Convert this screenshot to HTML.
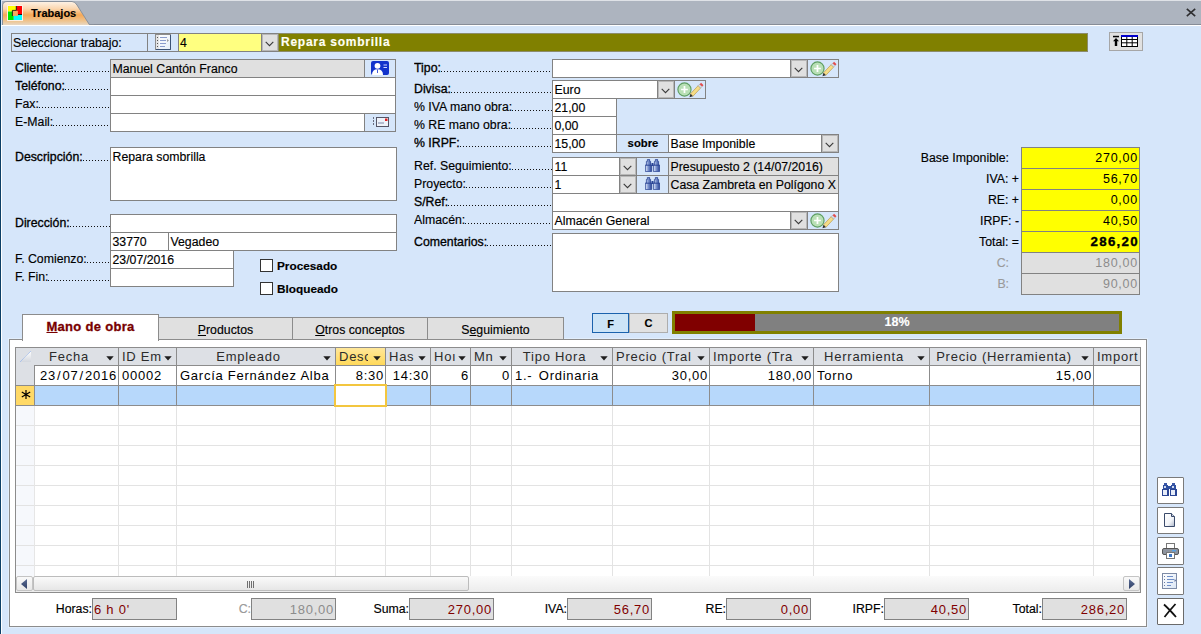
<!DOCTYPE html><html><head><meta charset="utf-8"><style>
html,body{margin:0;padding:0}
body{width:1201px;height:634px;overflow:hidden;position:relative;background:#d6e6fa;font-family:"Liberation Sans",sans-serif;font-size:12.3px;color:#000;-webkit-text-stroke:0.15px}
.a{position:absolute;box-sizing:border-box;overflow:hidden}
svg{-webkit-text-stroke:0}
.t{position:absolute;left:1.5px;top:2px;white-space:nowrap;line-height:15px}
.l{position:absolute;white-space:nowrap;line-height:15px}
.g{font-size:13px;letter-spacing:0.75px;-webkit-text-stroke:0}
</style></head><body>
<div class="a" style="left:0px;top:0px;width:1px;height:634px;background:#0d3f66"></div>
<div class="a" style="left:1px;top:25px;width:1px;height:609px;background:#ffffff"></div>
<div class="a" style="left:2px;top:0px;width:1199px;height:24px;background:#adb4bf"></div>
<div class="a" style="left:2px;top:0px;width:1199px;height:1px;background:#dfe2e7"></div>
<div class="a" style="left:2px;top:24px;width:1199px;height:1px;background:#878d97"></div>
<div class="a" style="left:2px;top:25px;width:1199px;height:1px;background:#ffffff"></div>
<svg class="a" style="left:2px;top:1px" width="92" height="25" viewBox="0 0 92 25">
<defs><linearGradient id="tg" x1="0" y1="0" x2="0" y2="1">
<stop offset="0" stop-color="#fdf3e8"/><stop offset="0.3" stop-color="#fbd6ae"/><stop offset="0.55" stop-color="#f6a957"/><stop offset="0.8" stop-color="#eec490"/><stop offset="1" stop-color="#e6ddd2"/></linearGradient></defs>
<path d="M0.5 25 V5 Q0.5 0.5 5 0.5 H70 Q73 0.5 75 4 L87.5 24 V25 Z" fill="url(#tg)"/><path d="M0.5 25 V5 Q0.5 0.5 5 0.5 H70 Q73 0.5 75 4 L87.5 23.8 H92" fill="none" stroke="#8a929c" stroke-width="1"/>
<rect x="0" y="24" width="92" height="1" fill="#ffffff"/>
</svg>
<svg class="a" style="left:7px;top:5px" width="16" height="16" viewBox="0 0 16 16">
<rect x="0" y="0" width="16" height="16" fill="#fbf1e6"/>
<rect x="1" y="1" width="8.3" height="5.5" fill="#ffff00"/><rect x="9.3" y="1" width="5.7" height="8.5" fill="#ff0000"/>
<rect x="1" y="6.5" width="5.8" height="8.5" fill="#00e600"/><rect x="6.8" y="9.5" width="8.2" height="5.5" fill="#00ffff"/>
<path d="M5.4 11 V5.4 H9.3 V1 M10.9 9.5 H15" fill="none" stroke="#1a1a1a" stroke-width="1"/>
<rect x="5.9" y="5.9" width="5" height="5" fill="#f5a860"/>
</svg>
<div class="l" style="left:31px;top:6px;font-size:11px;line-height:15px"><b>Trabajos</b></div>
<svg class="a" style="left:1186px;top:8px" width="10" height="9" viewBox="0 0 10 9"><path d="M0.8 0.8 L9.2 8.2 M9.2 0.8 L0.8 8.2" stroke="#2e2e30" stroke-width="1.6"/></svg>
<div class="a" style="left:11px;top:33px;width:137px;height:19px;border:1px solid #828282;background:#d6e6fa"><span class="t" style="left:1px;top:2px;font-size:12.3px">Seleccionar trabajo:</span></div>
<div class="a" style="left:147px;top:33px;width:32px;height:19px;border:1px solid #828282;background:#d6e6fa"></div>
<svg class="a" style="left:155px;top:34px" width="16" height="16" viewBox="0 0 16 16"><defs><linearGradient id="l0" x1="0" y1="0" x2="1" y2="1"><stop offset="0" stop-color="#fff"/><stop offset="1" stop-color="#e6eef8"/></linearGradient></defs><rect x="0.5" y="0.5" width="15" height="15" fill="url(#l0)" stroke="#8c8c8c"/><rect x="1" y="1" width="3" height="14" fill="#e4e4e4"/><path d="M15.5 1 V15.5 H1" fill="none" stroke="#3a5275"/><path d="M2.5 3 V4 M2.5 6 V7 M2.5 9 V10 M2.5 12 V13" stroke="#555"/><path d="M5 3.5 H12 M5 6.5 H11 M5 9.5 H11 M5 12.5 H10" stroke="#8a9ccc"/><path d="M12 5 L14 6.5 L12 8Z" fill="#9a9a9a"/></svg>
<div class="a" style="left:178px;top:33px;width:85px;height:19px;border:1px solid #828282;background:#ffff80;"><span class="t" style="top:2px;left:1px">4</span></div>
<div class="a" style="left:261px;top:33px;width:18px;height:19px;border:1px solid #828282;background:#e0e0e0;box-shadow:inset 0 0 0 1px #b8b8b8;display:flex;align-items:center;justify-content:center;padding-top:1px"><svg width="9" height="6" viewBox="0 0 9 6" style="margin-top:2px;margin-right:1px"><path d="M0.7 0.8 L4.5 4.6 L8.3 0.8" fill="none" stroke="#3a3a3a" stroke-width="1.1"/></svg></div>
<div class="a" style="left:278px;top:33px;width:810px;height:19px;background:#808000;border:1px solid #8c8c6a"><span class="t" style="left:2px;top:1px;color:#fffff4;font-weight:bold;font-size:12px;letter-spacing:0.75px">Repara sombrilla</span></div>
<div class="a" style="left:1109px;top:32px;width:34px;height:19px;border:1px solid #a6a6a6;background:#e1e1e1"></div>
<svg class="a" style="left:1112px;top:35px" width="26" height="12" viewBox="0 0 26 12"><rect x="1" y="0.8" width="6" height="1.5" fill="#000"/><path d="M4 3 L7 6.2 H5.2 V11 H2.8 V6.2 H1 Z" fill="#000"/><rect x="9.5" y="0.5" width="16" height="11" fill="#fff" stroke="#000"/><rect x="9" y="0" width="17" height="2" fill="#0000cc"/><path d="M9 4.5 H26 M9 7.8 H26 M14.8 2 V11.5 M20.2 2 V11.5" stroke="#000" stroke-width="1"/></svg>
<div class="a" style="left:15px;top:60px;width:95px;height:16px;display:flex;-webkit-text-stroke:0.3px"><span style="line-height:16px;white-space:nowrap">Cliente:</span><i style="flex:1;background-image:linear-gradient(to right,#111 1px,transparent 1px);background-size:3px 1px;background-repeat:repeat-x;background-position:0px 11px"></i></div>
<div class="a" style="left:15px;top:78px;width:95px;height:16px;display:flex;-webkit-text-stroke:0.3px"><span style="line-height:16px;white-space:nowrap">Teléfono:</span><i style="flex:1;background-image:linear-gradient(to right,#111 1px,transparent 1px);background-size:3px 1px;background-repeat:repeat-x;background-position:0px 11px"></i></div>
<div class="a" style="left:15px;top:96px;width:95px;height:16px;display:flex;"><span style="line-height:16px;white-space:nowrap">Fax:</span><i style="flex:1;background-image:linear-gradient(to right,#111 1px,transparent 1px);background-size:3px 1px;background-repeat:repeat-x;background-position:0px 11px"></i></div>
<div class="a" style="left:15px;top:114px;width:95px;height:16px;display:flex;"><span style="line-height:16px;white-space:nowrap">E-Mail:</span><i style="flex:1;background-image:linear-gradient(to right,#111 1px,transparent 1px);background-size:3px 1px;background-repeat:repeat-x;background-position:0px 11px"></i></div>
<div class="a" style="left:110px;top:59px;width:286px;height:19px;border:1px solid #828282;background:#e0e0e0;"><span class="t" style="">Manuel Cantón Franco</span></div>
<div class="a" style="left:364px;top:59px;width:32px;height:19px;border:1px solid #828282;background:#d6e6fa"></div>
<svg class="a" style="left:371px;top:61px" width="18" height="15" viewBox="0 0 18 15"><rect x="0" y="0" width="18" height="14" rx="2" fill="#1133cc"/><circle cx="6.5" cy="4.8" r="2.9" fill="#fff"/><path d="M1 14 Q1 8.3 6.5 8.3 Q12 8.3 12 14 Z" fill="#fff"/><path d="M6.5 8.5 V12" stroke="#1133cc" stroke-width="0.8"/><path d="M12.5 4 H16 M12.5 6.5 H16" stroke="#cfd8ff" stroke-width="1.2"/></svg>
<div class="a" style="left:110px;top:77px;width:286px;height:19px;border:1px solid #828282;background:#fff;"></div>
<div class="a" style="left:110px;top:95px;width:286px;height:19px;border:1px solid #828282;background:#fff;"></div>
<div class="a" style="left:110px;top:113px;width:286px;height:19px;border:1px solid #828282;background:#fff;"></div>
<div class="a" style="left:364px;top:113px;width:32px;height:19px;border:1px solid #828282;background:#d6e6fa"></div>
<svg class="a" style="left:372px;top:117px" width="17" height="10" viewBox="0 0 17 10"><path d="M1 1 H2 M1 4 H2 M1 7 H2" stroke="#445" stroke-width="1.5"/><rect x="4.5" y="0.5" width="12" height="9" fill="#eef2fa" stroke="#556" stroke-width="1"/><path d="M6 6 H12" stroke="#7a88a8" stroke-width="1"/><rect x="13" y="1.5" width="2.5" height="2.5" fill="#e02020"/></svg>
<div class="a" style="left:15px;top:149px;width:95px;height:16px;display:flex;-webkit-text-stroke:0.3px"><span style="line-height:16px;white-space:nowrap">Descripción:</span><i style="flex:1;background-image:linear-gradient(to right,#111 1px,transparent 1px);background-size:3px 1px;background-repeat:repeat-x;background-position:0px 11px"></i></div>
<div class="a" style="left:110px;top:147px;width:287px;height:54px;border:1px solid #828282;background:#fff;"><span class="t" style="">Repara sombrilla</span></div>
<div class="a" style="left:15px;top:215px;width:95px;height:16px;display:flex;-webkit-text-stroke:0.3px"><span style="line-height:16px;white-space:nowrap">Dirección:</span><i style="flex:1;background-image:linear-gradient(to right,#111 1px,transparent 1px);background-size:3px 1px;background-repeat:repeat-x;background-position:0px 11px"></i></div>
<div class="a" style="left:110px;top:214px;width:287px;height:19px;border:1px solid #828282;background:#fff;"></div>
<div class="a" style="left:110px;top:232px;width:59px;height:19px;border:1px solid #828282;background:#fff;"><span class="t" style="">33770</span></div>
<div class="a" style="left:168px;top:232px;width:229px;height:19px;border:1px solid #828282;background:#fff;"><span class="t" style="">Vegadeo</span></div>
<div class="a" style="left:15px;top:251px;width:95px;height:16px;display:flex;"><span style="line-height:16px;white-space:nowrap">F. Comienzo:</span><i style="flex:1;background-image:linear-gradient(to right,#111 1px,transparent 1px);background-size:3px 1px;background-repeat:repeat-x;background-position:0px 11px"></i></div>
<div class="a" style="left:15px;top:269px;width:95px;height:16px;display:flex;"><span style="line-height:16px;white-space:nowrap">F. Fin:</span><i style="flex:1;background-image:linear-gradient(to right,#111 1px,transparent 1px);background-size:3px 1px;background-repeat:repeat-x;background-position:0px 11px"></i></div>
<div class="a" style="left:110px;top:250px;width:124px;height:19px;border:1px solid #828282;background:#fff;"><span class="t" style="">23/07/2016</span></div>
<div class="a" style="left:110px;top:268px;width:124px;height:19px;border:1px solid #828282;background:#fff;"></div>
<div class="a" style="left:260px;top:259px;width:13px;height:13px;border:1px solid #333;background:#fff"></div>
<div class="l" style="left:277px;top:259px;font-size:11.8px"><b>Procesado</b></div>
<div class="a" style="left:260px;top:282px;width:13px;height:13px;border:1px solid #333;background:#fff"></div>
<div class="l" style="left:277px;top:282px;font-size:11.8px"><b>Bloqueado</b></div>
<div class="a" style="left:414px;top:60px;width:138px;height:16px;display:flex;-webkit-text-stroke:0.3px"><span style="line-height:16px;white-space:nowrap">Tipo:</span><i style="flex:1;background-image:linear-gradient(to right,#111 1px,transparent 1px);background-size:3px 1px;background-repeat:repeat-x;background-position:0px 11px"></i></div>
<div class="a" style="left:552px;top:59px;width:287px;height:19px;border:1px solid #828282;background:#fff;"></div>
<div class="a" style="left:790px;top:59px;width:18px;height:19px;border:1px solid #828282;background:#e0e0e0;box-shadow:inset 0 0 0 1px #b8b8b8;display:flex;align-items:center;justify-content:center;padding-top:1px"><svg width="9" height="6" viewBox="0 0 9 6" style="margin-top:2px;margin-right:1px"><path d="M0.7 0.8 L4.5 4.6 L8.3 0.8" fill="none" stroke="#3a3a3a" stroke-width="1.1"/></svg></div>
<div class="a" style="left:807px;top:59px;width:32px;height:19px;border:1px solid #828282;background:#d6e6fa;display:flex;align-items:center;justify-content:center"><svg width="30" height="17" viewBox="0 0 30 17" style="margin-right:1px"><circle cx="9.8" cy="8.5" r="6.8" fill="#b9e0b6" stroke="#5e9e62" stroke-width="1.2"/><path d="M9.8 5 V12 M6.3 8.5 H13.3" stroke="#fff" stroke-width="1.8"/><path d="M16 13 L24 4.5 L26.5 7 L18.5 15.5 Z" fill="#f6dc86" stroke="#b89a48" stroke-width="0.7"/><path d="M16 13 L18.5 15.5 L15 16.5 Z" fill="#303030"/><path d="M24 4.5 L25.5 3 L28 5.5 L26.5 7 Z" fill="#d8dde6" stroke="#999" stroke-width="0.5"/><path d="M25.5 3 L27 1.5 L29.5 4 L28 5.5 Z" fill="#e44a4a"/></svg></div>
<div class="a" style="left:414px;top:81px;width:138px;height:16px;display:flex;-webkit-text-stroke:0.3px"><span style="line-height:16px;white-space:nowrap">Divisa:</span><i style="flex:1;background-image:linear-gradient(to right,#111 1px,transparent 1px);background-size:3px 1px;background-repeat:repeat-x;background-position:0px 11px"></i></div>
<div class="a" style="left:552px;top:80px;width:154px;height:19px;border:1px solid #828282;background:#fff;"><span class="t" style="">Euro</span></div>
<div class="a" style="left:657px;top:80px;width:18px;height:19px;border:1px solid #828282;background:#e0e0e0;box-shadow:inset 0 0 0 1px #b8b8b8;display:flex;align-items:center;justify-content:center;padding-top:1px"><svg width="9" height="6" viewBox="0 0 9 6" style="margin-top:2px;margin-right:1px"><path d="M0.7 0.8 L4.5 4.6 L8.3 0.8" fill="none" stroke="#3a3a3a" stroke-width="1.1"/></svg></div>
<div class="a" style="left:674px;top:80px;width:32px;height:19px;border:1px solid #828282;background:#d6e6fa;display:flex;align-items:center;justify-content:center"><svg width="30" height="17" viewBox="0 0 30 17" style="margin-right:1px"><circle cx="9.8" cy="8.5" r="6.8" fill="#b9e0b6" stroke="#5e9e62" stroke-width="1.2"/><path d="M9.8 5 V12 M6.3 8.5 H13.3" stroke="#fff" stroke-width="1.8"/><path d="M16 13 L24 4.5 L26.5 7 L18.5 15.5 Z" fill="#f6dc86" stroke="#b89a48" stroke-width="0.7"/><path d="M16 13 L18.5 15.5 L15 16.5 Z" fill="#303030"/><path d="M24 4.5 L25.5 3 L28 5.5 L26.5 7 Z" fill="#d8dde6" stroke="#999" stroke-width="0.5"/><path d="M25.5 3 L27 1.5 L29.5 4 L28 5.5 Z" fill="#e44a4a"/></svg></div>
<div class="a" style="left:414px;top:99px;width:138px;height:16px;display:flex;"><span style="line-height:16px;white-space:nowrap">% IVA mano obra:</span><i style="flex:1;background-image:linear-gradient(to right,#111 1px,transparent 1px);background-size:3px 1px;background-repeat:repeat-x;background-position:0px 11px"></i></div>
<div class="a" style="left:552px;top:98px;width:65px;height:19px;border:1px solid #828282;background:#fff;"><span class="t" style="">21,00</span></div>
<div class="a" style="left:414px;top:117px;width:138px;height:16px;display:flex;"><span style="line-height:16px;white-space:nowrap">% RE mano obra:</span><i style="flex:1;background-image:linear-gradient(to right,#111 1px,transparent 1px);background-size:3px 1px;background-repeat:repeat-x;background-position:0px 11px"></i></div>
<div class="a" style="left:552px;top:116px;width:65px;height:19px;border:1px solid #828282;background:#fff;"><span class="t" style="">0,00</span></div>
<div class="a" style="left:414px;top:135px;width:138px;height:16px;display:flex;-webkit-text-stroke:0.3px"><span style="line-height:16px;white-space:nowrap">% IRPF:</span><i style="flex:1;background-image:linear-gradient(to right,#111 1px,transparent 1px);background-size:3px 1px;background-repeat:repeat-x;background-position:0px 11px"></i></div>
<div class="a" style="left:552px;top:134px;width:65px;height:19px;border:1px solid #828282;background:#fff;"><span class="t" style="">15,00</span></div>
<div class="a" style="left:616px;top:134px;width:53px;height:19px;border:1px solid #828282;background:#d6e6fa;text-align:center;line-height:16px;font-weight:bold;font-size:11.3px;padding-left:1px">sobre</div>
<div class="a" style="left:668px;top:134px;width:171px;height:19px;border:1px solid #828282;background:#fff;"><span class="t" style="">Base Imponible</span></div>
<div class="a" style="left:821px;top:134px;width:18px;height:19px;border:1px solid #828282;background:#e0e0e0;box-shadow:inset 0 0 0 1px #b8b8b8;display:flex;align-items:center;justify-content:center;padding-top:1px"><svg width="9" height="6" viewBox="0 0 9 6" style="margin-top:2px;margin-right:1px"><path d="M0.7 0.8 L4.5 4.6 L8.3 0.8" fill="none" stroke="#3a3a3a" stroke-width="1.1"/></svg></div>
<div class="a" style="left:414px;top:158px;width:138px;height:16px;display:flex;"><span style="line-height:16px;white-space:nowrap">Ref. Seguimiento:</span><i style="flex:1;background-image:linear-gradient(to right,#111 1px,transparent 1px);background-size:3px 1px;background-repeat:repeat-x;background-position:0px 11px"></i></div>
<div class="a" style="left:552px;top:157px;width:69px;height:19px;border:1px solid #828282;background:#fff;"><span class="t" style="">11</span></div>
<div class="a" style="left:619px;top:157px;width:18px;height:19px;border:1px solid #828282;background:#e0e0e0;box-shadow:inset 0 0 0 1px #b8b8b8;display:flex;align-items:center;justify-content:center;padding-top:1px"><svg width="9" height="6" viewBox="0 0 9 6" style="margin-top:2px;margin-right:1px"><path d="M0.7 0.8 L4.5 4.6 L8.3 0.8" fill="none" stroke="#3a3a3a" stroke-width="1.1"/></svg></div>
<div class="a" style="left:636px;top:157px;width:33px;height:19px;border:1px solid #828282;background:#d6e6fa;display:flex;align-items:center;justify-content:center;padding:0 1px 2px 0"><svg width="15" height="13" viewBox="0 0 15 13"><defs><linearGradient id="bg1" x1="0" y1="0" x2="1" y2="0"><stop offset="0" stop-color="#e8eefa"/><stop offset="0.45" stop-color="#7d95d0"/><stop offset="1" stop-color="#2b4596"/></linearGradient></defs><g fill="url(#bg1)" stroke="#2b4596" stroke-width="0.8"><path d="M2.4 0.4 H4.6 V2.4 H5.6 V6 H6.6 V12.6 H0.4 V6 H1.4 V2.4 H2.4 Z"/><path d="M10.4 0.4 H12.6 V2.4 H13.6 V6 H14.6 V12.6 H8.4 V6 H9.4 V2.4 H10.4 Z"/></g><rect x="6.5" y="4" width="2" height="3" fill="#2b4596"/><path d="M0.8 6.2 H6.2 M8.8 6.2 H14.2" stroke="#2b4596" stroke-width="1"/></svg></div>
<div class="a" style="left:668px;top:157px;width:171px;height:19px;border:1px solid #828282;background:#e0e0e0;"><span class="t" style="">Presupuesto 2 (14/07/2016)</span></div>
<div class="a" style="left:414px;top:176px;width:138px;height:16px;display:flex;"><span style="line-height:16px;white-space:nowrap">Proyecto:</span><i style="flex:1;background-image:linear-gradient(to right,#111 1px,transparent 1px);background-size:3px 1px;background-repeat:repeat-x;background-position:0px 11px"></i></div>
<div class="a" style="left:552px;top:175px;width:69px;height:19px;border:1px solid #828282;background:#fff;"><span class="t" style="">1</span></div>
<div class="a" style="left:619px;top:175px;width:18px;height:19px;border:1px solid #828282;background:#e0e0e0;box-shadow:inset 0 0 0 1px #b8b8b8;display:flex;align-items:center;justify-content:center;padding-top:1px"><svg width="9" height="6" viewBox="0 0 9 6" style="margin-top:2px;margin-right:1px"><path d="M0.7 0.8 L4.5 4.6 L8.3 0.8" fill="none" stroke="#3a3a3a" stroke-width="1.1"/></svg></div>
<div class="a" style="left:636px;top:175px;width:33px;height:19px;border:1px solid #828282;background:#d6e6fa;display:flex;align-items:center;justify-content:center;padding:0 1px 2px 0"><svg width="15" height="13" viewBox="0 0 15 13"><defs><linearGradient id="bg1" x1="0" y1="0" x2="1" y2="0"><stop offset="0" stop-color="#e8eefa"/><stop offset="0.45" stop-color="#7d95d0"/><stop offset="1" stop-color="#2b4596"/></linearGradient></defs><g fill="url(#bg1)" stroke="#2b4596" stroke-width="0.8"><path d="M2.4 0.4 H4.6 V2.4 H5.6 V6 H6.6 V12.6 H0.4 V6 H1.4 V2.4 H2.4 Z"/><path d="M10.4 0.4 H12.6 V2.4 H13.6 V6 H14.6 V12.6 H8.4 V6 H9.4 V2.4 H10.4 Z"/></g><rect x="6.5" y="4" width="2" height="3" fill="#2b4596"/><path d="M0.8 6.2 H6.2 M8.8 6.2 H14.2" stroke="#2b4596" stroke-width="1"/></svg></div>
<div class="a" style="left:668px;top:175px;width:171px;height:19px;border:1px solid #828282;background:#e0e0e0;"><span class="t" style="">Casa Zambreta en Polígono X</span></div>
<div class="a" style="left:414px;top:194px;width:138px;height:16px;display:flex;-webkit-text-stroke:0.3px"><span style="line-height:16px;white-space:nowrap">S/Ref:</span><i style="flex:1;background-image:linear-gradient(to right,#111 1px,transparent 1px);background-size:3px 1px;background-repeat:repeat-x;background-position:0px 11px"></i></div>
<div class="a" style="left:552px;top:193px;width:287px;height:19px;border:1px solid #828282;background:#fff;"></div>
<div class="a" style="left:414px;top:212px;width:138px;height:16px;display:flex;"><span style="line-height:16px;white-space:nowrap">Almacén:</span><i style="flex:1;background-image:linear-gradient(to right,#111 1px,transparent 1px);background-size:3px 1px;background-repeat:repeat-x;background-position:0px 11px"></i></div>
<div class="a" style="left:552px;top:211px;width:287px;height:19px;border:1px solid #828282;background:#fff;"><span class="t" style="">Almacén General</span></div>
<div class="a" style="left:790px;top:211px;width:18px;height:19px;border:1px solid #828282;background:#e0e0e0;box-shadow:inset 0 0 0 1px #b8b8b8;display:flex;align-items:center;justify-content:center;padding-top:1px"><svg width="9" height="6" viewBox="0 0 9 6" style="margin-top:2px;margin-right:1px"><path d="M0.7 0.8 L4.5 4.6 L8.3 0.8" fill="none" stroke="#3a3a3a" stroke-width="1.1"/></svg></div>
<div class="a" style="left:807px;top:211px;width:32px;height:19px;border:1px solid #828282;background:#d6e6fa;display:flex;align-items:center;justify-content:center"><svg width="30" height="17" viewBox="0 0 30 17" style="margin-right:1px"><circle cx="9.8" cy="8.5" r="6.8" fill="#b9e0b6" stroke="#5e9e62" stroke-width="1.2"/><path d="M9.8 5 V12 M6.3 8.5 H13.3" stroke="#fff" stroke-width="1.8"/><path d="M16 13 L24 4.5 L26.5 7 L18.5 15.5 Z" fill="#f6dc86" stroke="#b89a48" stroke-width="0.7"/><path d="M16 13 L18.5 15.5 L15 16.5 Z" fill="#303030"/><path d="M24 4.5 L25.5 3 L28 5.5 L26.5 7 Z" fill="#d8dde6" stroke="#999" stroke-width="0.5"/><path d="M25.5 3 L27 1.5 L29.5 4 L28 5.5 Z" fill="#e44a4a"/></svg></div>
<div class="a" style="left:414px;top:234px;width:138px;height:16px;display:flex;-webkit-text-stroke:0.3px"><span style="line-height:16px;white-space:nowrap">Comentarios:</span><i style="flex:1;background-image:linear-gradient(to right,#111 1px,transparent 1px);background-size:3px 1px;background-repeat:repeat-x;background-position:0px 11px"></i></div>
<div class="a" style="left:552px;top:233px;width:287px;height:59px;border:1px solid #828282;background:#fff;"></div>
<div class="a" style="left:1021px;top:147px;width:119px;height:22px;border:1px solid #828282;background:#ffff00"><span class="t g" style="left:auto;right:1px;top:3px;color:#000;font-size:12.5px;">270,00</span></div>
<div class="l" style="right:192px;top:151px;color:#000;font-size:12.3px">Base Imponible:</div>
<div class="a" style="left:1021px;top:168px;width:119px;height:22px;border:1px solid #828282;background:#ffff00"><span class="t g" style="left:auto;right:1px;top:3px;color:#000;font-size:12.5px;">56,70</span></div>
<div class="l" style="right:182px;top:172px;color:#000;font-size:12.3px">IVA: +</div>
<div class="a" style="left:1021px;top:189px;width:119px;height:22px;border:1px solid #828282;background:#ffff00"><span class="t g" style="left:auto;right:1px;top:3px;color:#000;font-size:12.5px;">0,00</span></div>
<div class="l" style="right:182px;top:193px;color:#000;font-size:12.3px">RE: +</div>
<div class="a" style="left:1021px;top:210px;width:119px;height:22px;border:1px solid #828282;background:#ffff00"><span class="t g" style="left:auto;right:1px;top:3px;color:#000;font-size:12.5px;">40,50</span></div>
<div class="l" style="right:182px;top:214px;color:#000;font-size:12.3px">IRPF: -</div>
<div class="a" style="left:1021px;top:231px;width:119px;height:22px;border:1px solid #828282;background:#ffff00"><span class="t g" style="left:auto;right:1px;top:3px;color:#000;font-size:12.5px;font-weight:bold;letter-spacing:1.3px;margin-right:-1px;font-size:13.3px;-webkit-text-stroke:0.35px;top:2px">286,20</span></div>
<div class="l" style="right:182px;top:235px;color:#000;font-size:12.3px">Total: =</div>
<div class="a" style="left:1021px;top:252px;width:119px;height:22px;border:1px solid #828282;background:#e0e0e0"><span class="t g" style="left:auto;right:1px;top:3px;color:#8c8c8c;font-size:12.5px;">180,00</span></div>
<div class="l" style="right:192px;top:256px;color:#9a9a9a;font-size:12.3px">C:</div>
<div class="a" style="left:1021px;top:273px;width:119px;height:22px;border:1px solid #828282;background:#e0e0e0"><span class="t g" style="left:auto;right:1px;top:3px;color:#8c8c8c;font-size:12.5px;">90,00</span></div>
<div class="l" style="right:192px;top:277px;color:#9a9a9a;font-size:12.3px">B:</div>
<div class="a" style="left:592px;top:313px;width:37px;height:20px;border:1px solid #1a62ad;background:#cce4f7;text-align:center;line-height:20px;font-weight:bold;font-size:11px">F</div>
<div class="a" style="left:629px;top:313px;width:39px;height:20px;border:1px solid #adadad;background:#e1e1e1;text-align:center;line-height:19px;font-weight:bold;font-size:11px">C</div>
<div class="a" style="left:672px;top:311px;width:450px;height:23px;border:3px solid #808000;background:#808080"></div>
<div class="a" style="left:675px;top:314px;width:80px;height:17px;background:#800000"></div>
<div class="l" style="left:672px;width:450px;top:315px;text-align:center;color:#fff;font-weight:bold;font-size:12.5px">18%</div>
<div class="a" style="left:8px;top:338px;width:1140px;height:290px;border:1px solid #e2eefc"></div>
<div class="a" style="left:9px;top:339px;width:1138px;height:288px;border:1px solid #8c8c8c;background:#fff"></div>
<div class="a" style="left:158px;top:317px;width:135px;height:23px;border:1px solid #8c8c8c;background:#e0e0e0;text-align:center;line-height:22px;font-size:12.3px;padding-top:1px"><u>P</u>roductos</div>
<div class="a" style="left:292px;top:317px;width:136px;height:23px;border:1px solid #8c8c8c;background:#e0e0e0;text-align:center;line-height:22px;font-size:12.3px;padding-top:1px"><u>O</u>tros conceptos</div>
<div class="a" style="left:427px;top:317px;width:137px;height:23px;border:1px solid #8c8c8c;background:#e0e0e0;text-align:center;line-height:22px;font-size:12.3px;padding-top:1px">S<u>e</u>guimiento</div>
<div class="a" style="left:22px;top:314px;width:137px;height:27px;border:1px solid #8c8c8c;border-bottom:none;background:#fff;text-align:center;line-height:24px;font-weight:bold;color:#780000;font-size:13px;letter-spacing:0.3px;-webkit-text-stroke:0.3px"><u>M</u>ano de obra</div>
<div class="a" style="left:15px;top:347px;width:1126px;height:246px;border:1px solid #8c8c8c;background:#fff"></div>
<div class="a" style="left:16px;top:405px;width:18px;height:171px;background:#f6f8fc"></div>
<div class="a" style="left:16px;top:405px;width:1124px;height:1px;background:#e3e3e3"></div>
<div class="a" style="left:16px;top:425px;width:1124px;height:1px;background:#e3e3e3"></div>
<div class="a" style="left:16px;top:445px;width:1124px;height:1px;background:#e3e3e3"></div>
<div class="a" style="left:16px;top:465px;width:1124px;height:1px;background:#e3e3e3"></div>
<div class="a" style="left:16px;top:485px;width:1124px;height:1px;background:#e3e3e3"></div>
<div class="a" style="left:16px;top:505px;width:1124px;height:1px;background:#e3e3e3"></div>
<div class="a" style="left:16px;top:525px;width:1124px;height:1px;background:#e3e3e3"></div>
<div class="a" style="left:16px;top:545px;width:1124px;height:1px;background:#e3e3e3"></div>
<div class="a" style="left:16px;top:565px;width:1124px;height:1px;background:#e3e3e3"></div>
<div class="a" style="left:34px;top:405px;width:1px;height:171px;background:#e6e6e6"></div>
<div class="a" style="left:118px;top:405px;width:1px;height:171px;background:#e3e3e3"></div>
<div class="a" style="left:176px;top:405px;width:1px;height:171px;background:#e3e3e3"></div>
<div class="a" style="left:335px;top:405px;width:1px;height:171px;background:#e3e3e3"></div>
<div class="a" style="left:385px;top:405px;width:1px;height:171px;background:#e3e3e3"></div>
<div class="a" style="left:430px;top:405px;width:1px;height:171px;background:#e3e3e3"></div>
<div class="a" style="left:470px;top:405px;width:1px;height:171px;background:#e3e3e3"></div>
<div class="a" style="left:511px;top:405px;width:1px;height:171px;background:#e3e3e3"></div>
<div class="a" style="left:612px;top:405px;width:1px;height:171px;background:#e3e3e3"></div>
<div class="a" style="left:709px;top:405px;width:1px;height:171px;background:#e3e3e3"></div>
<div class="a" style="left:813px;top:405px;width:1px;height:171px;background:#e3e3e3"></div>
<div class="a" style="left:929px;top:405px;width:1px;height:171px;background:#e3e3e3"></div>
<div class="a" style="left:1093px;top:405px;width:1px;height:171px;background:#e3e3e3"></div>
<div class="a" style="left:16px;top:348px;width:18px;height:37px;background:#dde0e5"></div>
<svg class="a" style="left:19px;top:350px" width="13" height="13" viewBox="0 0 13 13"><defs><linearGradient id="cg" x1="0" y1="0" x2="0" y2="1"><stop offset="0" stop-color="#ffffff"/><stop offset="1" stop-color="#d3d7de"/></linearGradient></defs><path d="M12 1 V12 H1 Z" fill="url(#cg)"/><path d="M1 12 L12 1" stroke="#9ab8ec" stroke-width="1" stroke-dasharray="1 0.6"/></svg>
<div class="a" style="left:34px;top:347px;width:85px;height:19px;border:1px solid #8c8c8c;border-left:none;background:#dde0e5"></div>
<div class="a" style="left:34px;top:347px;width:85px;height:19px"><div class="a g" style="left:1px;top:2px;width:68px;height:16px;text-align:center;line-height:16px;color:#2b2b2b;white-space:nowrap">Fecha</div><svg class="a" style="left:72px;top:9px" width="8" height="5" viewBox="0 0 8 5"><path d="M0.3 0.3 H7.7 L4 4.5 Z" fill="#1e1e1e"/></svg></div>
<div class="a" style="left:118px;top:347px;width:59px;height:19px;border:1px solid #8c8c8c;background:#dde0e5"></div>
<div class="a" style="left:118px;top:347px;width:59px;height:19px"><div class="a g" style="left:4px;top:2px;width:42px;height:16px;line-height:16px;color:#2b2b2b;white-space:nowrap">ID Em</div><svg class="a" style="left:46px;top:9px" width="8" height="5" viewBox="0 0 8 5"><path d="M0.3 0.3 H7.7 L4 4.5 Z" fill="#1e1e1e"/></svg></div>
<div class="a" style="left:176px;top:347px;width:160px;height:19px;border:1px solid #8c8c8c;background:#dde0e5"></div>
<div class="a" style="left:176px;top:347px;width:160px;height:19px"><div class="a g" style="left:1px;top:2px;width:143px;height:16px;text-align:center;line-height:16px;color:#2b2b2b;white-space:nowrap">Empleado</div><svg class="a" style="left:147px;top:9px" width="8" height="5" viewBox="0 0 8 5"><path d="M0.3 0.3 H7.7 L4 4.5 Z" fill="#1e1e1e"/></svg></div>
<div class="a" style="left:335px;top:347px;width:51px;height:19px;border:1px solid #8c8c8c;background:linear-gradient(#ffe79a,#ffd95a)"></div>
<div class="a" style="left:335px;top:347px;width:51px;height:19px"><div class="a g" style="left:4px;top:2px;width:29px;height:16px;line-height:16px;color:#2b2b2b;white-space:nowrap">Desc</div><svg class="a" style="left:38px;top:9px" width="8" height="5" viewBox="0 0 8 5"><path d="M0.3 0.3 H7.7 L4 4.5 Z" fill="#1e1e1e"/></svg></div>
<div class="a" style="left:385px;top:347px;width:46px;height:19px;border:1px solid #8c8c8c;background:#dde0e5"></div>
<div class="a" style="left:385px;top:347px;width:46px;height:19px"><div class="a g" style="left:4px;top:2px;width:29px;height:16px;line-height:16px;color:#2b2b2b;white-space:nowrap">Has</div><svg class="a" style="left:33px;top:9px" width="8" height="5" viewBox="0 0 8 5"><path d="M0.3 0.3 H7.7 L4 4.5 Z" fill="#1e1e1e"/></svg></div>
<div class="a" style="left:430px;top:347px;width:41px;height:19px;border:1px solid #8c8c8c;background:#dde0e5"></div>
<div class="a" style="left:430px;top:347px;width:41px;height:19px"><div class="a g" style="left:4px;top:2px;width:24px;height:16px;line-height:16px;color:#2b2b2b;white-space:nowrap">Hoı</div><svg class="a" style="left:28px;top:9px" width="8" height="5" viewBox="0 0 8 5"><path d="M0.3 0.3 H7.7 L4 4.5 Z" fill="#1e1e1e"/></svg></div>
<div class="a" style="left:470px;top:347px;width:42px;height:19px;border:1px solid #8c8c8c;background:#dde0e5"></div>
<div class="a" style="left:470px;top:347px;width:42px;height:19px"><div class="a g" style="left:4px;top:2px;width:25px;height:16px;line-height:16px;color:#2b2b2b;white-space:nowrap">Mn</div><svg class="a" style="left:29px;top:9px" width="8" height="5" viewBox="0 0 8 5"><path d="M0.3 0.3 H7.7 L4 4.5 Z" fill="#1e1e1e"/></svg></div>
<div class="a" style="left:511px;top:347px;width:102px;height:19px;border:1px solid #8c8c8c;background:#dde0e5"></div>
<div class="a" style="left:511px;top:347px;width:102px;height:19px"><div class="a g" style="left:1px;top:2px;width:85px;height:16px;text-align:center;line-height:16px;color:#2b2b2b;white-space:nowrap">Tipo Hora</div><svg class="a" style="left:89px;top:9px" width="8" height="5" viewBox="0 0 8 5"><path d="M0.3 0.3 H7.7 L4 4.5 Z" fill="#1e1e1e"/></svg></div>
<div class="a" style="left:612px;top:347px;width:98px;height:19px;border:1px solid #8c8c8c;background:#dde0e5"></div>
<div class="a" style="left:612px;top:347px;width:98px;height:19px"><div class="a g" style="left:4px;top:2px;width:81px;height:16px;line-height:16px;color:#2b2b2b;white-space:nowrap">Precio (Tral</div><svg class="a" style="left:85px;top:9px" width="8" height="5" viewBox="0 0 8 5"><path d="M0.3 0.3 H7.7 L4 4.5 Z" fill="#1e1e1e"/></svg></div>
<div class="a" style="left:709px;top:347px;width:105px;height:19px;border:1px solid #8c8c8c;background:#dde0e5"></div>
<div class="a" style="left:709px;top:347px;width:105px;height:19px"><div class="a g" style="left:4px;top:2px;width:88px;height:16px;line-height:16px;color:#2b2b2b;white-space:nowrap">Importe (Tra</div><svg class="a" style="left:92px;top:9px" width="8" height="5" viewBox="0 0 8 5"><path d="M0.3 0.3 H7.7 L4 4.5 Z" fill="#1e1e1e"/></svg></div>
<div class="a" style="left:813px;top:347px;width:117px;height:19px;border:1px solid #8c8c8c;background:#dde0e5"></div>
<div class="a" style="left:813px;top:347px;width:117px;height:19px"><div class="a g" style="left:1px;top:2px;width:100px;height:16px;text-align:center;line-height:16px;color:#2b2b2b;white-space:nowrap">Herramienta</div><svg class="a" style="left:104px;top:9px" width="8" height="5" viewBox="0 0 8 5"><path d="M0.3 0.3 H7.7 L4 4.5 Z" fill="#1e1e1e"/></svg></div>
<div class="a" style="left:929px;top:347px;width:165px;height:19px;border:1px solid #8c8c8c;background:#dde0e5"></div>
<div class="a" style="left:929px;top:347px;width:165px;height:19px"><div class="a g" style="left:1px;top:2px;width:148px;height:16px;text-align:center;line-height:16px;color:#2b2b2b;white-space:nowrap">Precio (Herramienta)</div><svg class="a" style="left:152px;top:9px" width="8" height="5" viewBox="0 0 8 5"><path d="M0.3 0.3 H7.7 L4 4.5 Z" fill="#1e1e1e"/></svg></div>
<div class="a" style="left:1093px;top:347px;width:48px;height:19px;border:1px solid #8c8c8c;background:#dde0e5"></div>
<div class="a" style="left:1093px;top:347px;width:48px;height:19px"><div class="a g" style="left:4px;top:2px;width:42px;height:16px;line-height:16px;color:#2b2b2b;white-space:nowrap">Import</div></div>
<div class="a" style="left:15px;top:347px;width:20px;height:1px;background:#8c8c8c"></div>
<div class="a" style="left:34px;top:365px;width:85px;height:21px;border:1px solid #8c8c8c;background:#fff"></div>
<div class="a g" style="left:35px;top:368px;width:83px;height:16px;text-align:right;line-height:16px;white-space:nowrap;letter-spacing:0.75px;padding-right:1px">23<span style="margin:0 1.1px">/</span>07<span style="margin:0 1.1px">/</span>2016</div>
<div class="a" style="left:118px;top:365px;width:59px;height:21px;border:1px solid #8c8c8c;background:#fff"></div>
<div class="a g" style="left:122px;top:368px;width:54px;height:16px;line-height:16px;white-space:nowrap">00002</div>
<div class="a" style="left:176px;top:365px;width:160px;height:21px;border:1px solid #8c8c8c;background:#fff"></div>
<div class="a g" style="left:180px;top:368px;width:155px;height:16px;line-height:16px;white-space:nowrap">García Fernández Alba</div>
<div class="a" style="left:335px;top:365px;width:51px;height:21px;border:1px solid #8c8c8c;background:#fff"></div>
<div class="a g" style="left:336px;top:368px;width:49px;height:16px;text-align:right;line-height:16px;white-space:nowrap;letter-spacing:0.75px;padding-right:1px">8:30</div>
<div class="a" style="left:385px;top:365px;width:46px;height:21px;border:1px solid #8c8c8c;background:#fff"></div>
<div class="a g" style="left:386px;top:368px;width:44px;height:16px;text-align:right;line-height:16px;white-space:nowrap;letter-spacing:0.75px;padding-right:1px">14:30</div>
<div class="a" style="left:430px;top:365px;width:41px;height:21px;border:1px solid #8c8c8c;background:#fff"></div>
<div class="a g" style="left:431px;top:368px;width:39px;height:16px;text-align:right;line-height:16px;white-space:nowrap;letter-spacing:0.75px;padding-right:1px">6</div>
<div class="a" style="left:470px;top:365px;width:42px;height:21px;border:1px solid #8c8c8c;background:#fff"></div>
<div class="a g" style="left:471px;top:368px;width:40px;height:16px;text-align:right;line-height:16px;white-space:nowrap;letter-spacing:0.75px;padding-right:1px">0</div>
<div class="a" style="left:511px;top:365px;width:102px;height:21px;border:1px solid #8c8c8c;background:#fff"></div>
<div class="a g" style="left:515px;top:368px;width:97px;height:16px;line-height:16px;white-space:nowrap">1.-<span style="margin-right:2px"> </span>Ordinaria</div>
<div class="a" style="left:612px;top:365px;width:98px;height:21px;border:1px solid #8c8c8c;background:#fff"></div>
<div class="a g" style="left:613px;top:368px;width:96px;height:16px;text-align:right;line-height:16px;white-space:nowrap;letter-spacing:0.75px;padding-right:1px">30,00</div>
<div class="a" style="left:709px;top:365px;width:105px;height:21px;border:1px solid #8c8c8c;background:#fff"></div>
<div class="a g" style="left:710px;top:368px;width:103px;height:16px;text-align:right;line-height:16px;white-space:nowrap;letter-spacing:0.75px;padding-right:1px">180,00</div>
<div class="a" style="left:813px;top:365px;width:117px;height:21px;border:1px solid #8c8c8c;background:#fff"></div>
<div class="a g" style="left:817px;top:368px;width:112px;height:16px;line-height:16px;white-space:nowrap">Torno</div>
<div class="a" style="left:929px;top:365px;width:165px;height:21px;border:1px solid #8c8c8c;background:#fff"></div>
<div class="a g" style="left:930px;top:368px;width:163px;height:16px;text-align:right;line-height:16px;white-space:nowrap;letter-spacing:0.75px;padding-right:1px">15,00</div>
<div class="a" style="left:1093px;top:365px;width:48px;height:21px;border:1px solid #8c8c8c;background:#fff"></div>
<div class="a" style="left:15px;top:385px;width:1126px;height:1px;background:#8c8c8c"></div>
<div class="a" style="left:16px;top:386px;width:18px;height:19px;background:#ffd966"></div>
<svg class="a" style="left:21px;top:390px" width="10" height="9" viewBox="0 0 10 9"><path d="M5 0 V9 M0.8 2 L9.2 7 M9.2 2 L0.8 7" stroke="#000" stroke-width="1.2"/></svg>
<div class="a" style="left:34px;top:385px;width:85px;height:21px;border:1px solid #8c8c8c;background:#b7d8fb"></div>
<div class="a" style="left:118px;top:385px;width:59px;height:21px;border:1px solid #8c8c8c;background:#b7d8fb"></div>
<div class="a" style="left:176px;top:385px;width:160px;height:21px;border:1px solid #8c8c8c;background:#b7d8fb"></div>
<div class="a" style="left:335px;top:385px;width:51px;height:21px;border:1px solid #8c8c8c;background:#b7d8fb"></div>
<div class="a" style="left:385px;top:385px;width:46px;height:21px;border:1px solid #8c8c8c;background:#b7d8fb"></div>
<div class="a" style="left:430px;top:385px;width:41px;height:21px;border:1px solid #8c8c8c;background:#b7d8fb"></div>
<div class="a" style="left:470px;top:385px;width:42px;height:21px;border:1px solid #8c8c8c;background:#b7d8fb"></div>
<div class="a" style="left:511px;top:385px;width:102px;height:21px;border:1px solid #8c8c8c;background:#b7d8fb"></div>
<div class="a" style="left:612px;top:385px;width:98px;height:21px;border:1px solid #8c8c8c;background:#b7d8fb"></div>
<div class="a" style="left:709px;top:385px;width:105px;height:21px;border:1px solid #8c8c8c;background:#b7d8fb"></div>
<div class="a" style="left:813px;top:385px;width:117px;height:21px;border:1px solid #8c8c8c;background:#b7d8fb"></div>
<div class="a" style="left:929px;top:385px;width:165px;height:21px;border:1px solid #8c8c8c;background:#b7d8fb"></div>
<div class="a" style="left:1093px;top:385px;width:48px;height:21px;border:1px solid #8c8c8c;background:#b7d8fb"></div>
<div class="a" style="left:15px;top:405px;width:20px;height:1px;background:#8c8c8c"></div>
<div class="a" style="left:334px;top:384px;width:53px;height:23px;border:2px solid #f3c63f;background:#fff"></div>
<div class="a" style="left:16px;top:576px;width:1124px;height:16px;background:linear-gradient(#fbfbfb,#ececec)"></div>
<div class="a" style="left:16px;top:576px;width:17px;height:15px;border:1px solid #c4c4c4;border-radius:2px;background:linear-gradient(#f9f9f9,#e8e8e8)"></div>
<svg class="a" style="left:21px;top:579px" width="6" height="10" viewBox="0 0 6 10"><defs><linearGradient id="ag" x1="0" y1="0" x2="0" y2="1"><stop offset="0" stop-color="#5a6c94"/><stop offset="1" stop-color="#2f3f66"/></linearGradient></defs><path d="M6 0 V10 L0 5 Z" fill="url(#ag)"/></svg>
<div class="a" style="left:33px;top:576px;width:436px;height:15px;border:1px solid #bcbcbc;border-radius:2px;background:linear-gradient(#fafafa,#e6e6e6)"></div>
<svg class="a" style="left:247px;top:581px" width="8" height="7" viewBox="0 0 8 7"><path d="M0.5 0 V7 M2.5 0 V7 M4.5 0 V7 M6.5 0 V7" stroke="#707070" stroke-width="1"/></svg>
<div class="a" style="left:1123px;top:576px;width:17px;height:15px;border:1px solid #c4c4c4;border-radius:2px;background:linear-gradient(#f9f9f9,#e8e8e8)"></div>
<svg class="a" style="left:1129px;top:579px" width="6" height="10" viewBox="0 0 6 10"><defs><linearGradient id="ag2" x1="0" y1="0" x2="0" y2="1"><stop offset="0" stop-color="#5a6c94"/><stop offset="1" stop-color="#2f3f66"/></linearGradient></defs><path d="M0 0 V10 L6 5 Z" fill="url(#ag2)"/></svg>
<div class="a" style="left:15px;top:592px;width:1126px;height:1px;background:#8c8c8c"></div>
<div class="a" style="left:92px;top:598px;width:85px;height:22px;border:1px solid #828282;background:#e0e0e0"></div>
<div class="a g" style="left:94px;top:602px;width:84px;height:16px;line-height:16px;color:#800000;white-space:nowrap">6 h 0'</div>
<div class="l" style="right:1109px;top:602px;color:#000;font-size:12.3px">Horas:</div>
<div class="a" style="left:251px;top:598px;width:85px;height:22px;border:1px solid #828282;background:#e0e0e0"></div>
<div class="a g" style="left:252px;top:602px;width:82px;height:16px;text-align:right;line-height:16px;color:#8c8c8c;white-space:nowrap">180,00</div>
<div class="l" style="right:950px;top:602px;color:#9a9a9a;font-size:12.3px">C:</div>
<div class="a" style="left:409px;top:598px;width:85px;height:22px;border:1px solid #828282;background:#e0e0e0"></div>
<div class="a g" style="left:410px;top:602px;width:82px;height:16px;text-align:right;line-height:16px;color:#800000;white-space:nowrap">270,00</div>
<div class="l" style="right:792px;top:602px;color:#000;font-size:12.3px">Suma:</div>
<div class="a" style="left:567px;top:598px;width:85px;height:22px;border:1px solid #828282;background:#e0e0e0"></div>
<div class="a g" style="left:568px;top:602px;width:82px;height:16px;text-align:right;line-height:16px;color:#800000;white-space:nowrap">56,70</div>
<div class="l" style="right:634px;top:602px;color:#000;font-size:12.3px">IVA:</div>
<div class="a" style="left:726px;top:598px;width:85px;height:22px;border:1px solid #828282;background:#e0e0e0"></div>
<div class="a g" style="left:727px;top:602px;width:82px;height:16px;text-align:right;line-height:16px;color:#800000;white-space:nowrap">0,00</div>
<div class="l" style="right:475px;top:602px;color:#000;font-size:12.3px">RE:</div>
<div class="a" style="left:884px;top:598px;width:85px;height:22px;border:1px solid #828282;background:#e0e0e0"></div>
<div class="a g" style="left:885px;top:602px;width:82px;height:16px;text-align:right;line-height:16px;color:#800000;white-space:nowrap">40,50</div>
<div class="l" style="right:317px;top:602px;color:#000;font-size:12.3px">IRPF:</div>
<div class="a" style="left:1042px;top:598px;width:85px;height:22px;border:1px solid #828282;background:#e0e0e0"></div>
<div class="a g" style="left:1043px;top:602px;width:82px;height:16px;text-align:right;line-height:16px;color:#800000;white-space:nowrap">286,20</div>
<div class="l" style="right:159px;top:602px;color:#000;font-size:12.3px">Total:</div>
<div class="a" style="left:1157px;top:477px;width:27px;height:27px;border:1px solid #7a7a7a;border-radius:1px;background:#fff"></div>
<div class="a" style="left:1157px;top:507px;width:27px;height:27px;border:1px solid #7a7a7a;border-radius:1px;background:#fff"></div>
<div class="a" style="left:1157px;top:537px;width:27px;height:28px;border:1px solid #7a7a7a;border-radius:1px;background:#fff"></div>
<div class="a" style="left:1157px;top:567px;width:27px;height:28px;border:1px solid #7a7a7a;border-radius:1px;background:#fff"></div>
<div class="a" style="left:1157px;top:598px;width:27px;height:27px;border:1px solid #6a6a6a;border-radius:1px;background:#fff"></div>
<svg class="a" style="left:1162px;top:483px" width="16" height="13" viewBox="0 0 16 13"><rect x="2" y="0" width="3" height="2" fill="#3b58a8"/><rect x="10" y="0" width="3" height="2" fill="#3b58a8"/><rect x="1" y="2" width="5" height="4" fill="#3050a0"/><rect x="9" y="2" width="5" height="4" fill="#3050a0"/><rect x="6" y="3" width="3" height="3" fill="#3050a0"/><rect x="0" y="6" width="7" height="7" fill="#2a4594"/><rect x="8" y="6" width="7" height="7" fill="#2a4594"/><rect x="1" y="7" width="4" height="5" fill="#e6ecf8"/><rect x="9" y="7" width="4" height="5" fill="#e6ecf8"/><rect x="2" y="3" width="2" height="2" fill="#d0daf0"/><rect x="10" y="3" width="2" height="2" fill="#d0daf0"/></svg>
<svg class="a" style="left:1163px;top:512px" width="13" height="16" viewBox="0 0 13 16"><defs><linearGradient id="pg" x1="0" y1="0" x2="1" y2="1"><stop offset="0" stop-color="#fff"/><stop offset="0.6" stop-color="#f2f4f8"/><stop offset="1" stop-color="#a9b3c6"/></linearGradient></defs><path d="M1.5 1.5 H8.5 L11.5 4.5 V14.5 H1.5 Z" fill="url(#pg)" stroke="#3a4a6a"/><path d="M8.5 1.5 V4.5 H11.5" fill="#c8d0e0" stroke="#3a4a6a"/></svg>
<svg class="a" style="left:1162px;top:543px" width="17" height="16" viewBox="0 0 17 16"><rect x="4.5" y="0.5" width="8" height="5" fill="#fff" stroke="#777"/><rect x="0.5" y="5.5" width="16" height="6" rx="1.5" fill="#8e949e" stroke="#555"/><rect x="10" y="7" width="4" height="1.5" fill="#5aa0e0"/><rect x="4.5" y="9.5" width="8" height="6" fill="#fff" stroke="#777"/><rect x="7" y="11" width="3" height="3" fill="#3d78c8"/></svg>
<div class="a" style="left:1162px;top:573px"><svg width="16" height="16" viewBox="0 0 16 16"><defs><linearGradient id="lg1" x1="0" y1="0" x2="1" y2="1"><stop offset="0" stop-color="#ffffff"/><stop offset="1" stop-color="#dbe6f5"/></linearGradient></defs><rect x="0.5" y="0.5" width="14" height="15" fill="url(#lg1)" stroke="#7d8ba6"/><path d="M2.5 3 V4 M2.5 6 V7 M2.5 9 V10 M2.5 12 V13" stroke="#6a7aa0" stroke-width="1"/><path d="M5 3.5 H11 M5 6.5 H12 M5 9.5 H11 M5 12.5 H9" stroke="#6f8fc8" stroke-width="1"/><path d="M12.5 6 L14.5 7.5 L12.5 9 Z" fill="#6a7aa0"/></svg></div>
<svg class="a" style="left:1163px;top:603px" width="14" height="15" viewBox="0 0 14 15"><path d="M1 1.5 Q6 6 13 14 M12.5 1 Q7 7 1.5 14" fill="none" stroke="#111" stroke-width="1.8"/></svg>
</body></html>
